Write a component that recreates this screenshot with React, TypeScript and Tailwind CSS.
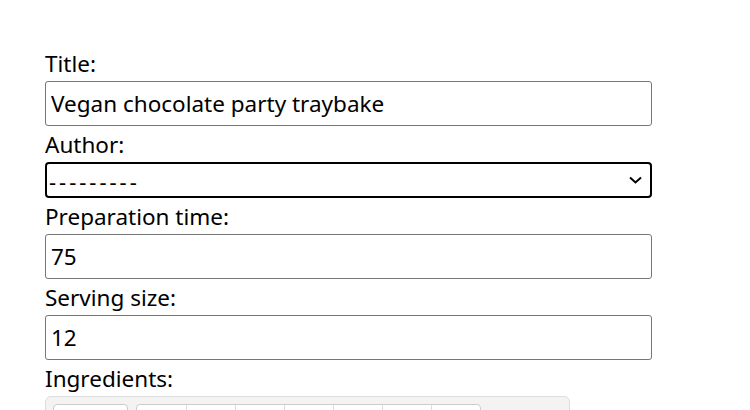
export default function App() {
  const segments = [0, 1, 2, 3, 4, 5, 6];

  return (
    <main className="bg-white h-[410px] overflow-hidden" style={{ fontFamily: '"Noto Sans", "Open Sans", sans-serif' }}>
      <form className="pl-[45px] pt-[45px] w-[652px] text-[22.5px] text-black">
        <label className="block h-9 leading-[30px] pt-[4px]">Title:</label>
        <input
          type="text"
          defaultValue="Vegan chocolate party traybake"
          className="block w-full h-[45px] border border-[#767676] rounded-[3px] px-[5px] text-[22.5px] outline-none"
        />

        <label className="block h-9 leading-[30px] pt-[4px]">Author:</label>
        <div className="relative h-9 border-2 border-black rounded-[4px] flex items-center pl-[2px] pt-[2px]">
          <span className="text-[22px] leading-none tracking-[3px]">---------</span>
          <svg className="absolute right-[8px] top-1/2 -translate-y-1/2" width="13" height="8" viewBox="0 0 13 8">
            <path d="M1 1.5 L6.5 6.5 L12 1.5" fill="none" stroke="black" strokeWidth="2" />
          </svg>
        </div>

        <label className="block h-9 leading-[30px] pt-[4px]">Preparation time:</label>
        <input
          type="text"
          defaultValue="75"
          className="block w-full h-[45px] border border-[#767676] rounded-[3px] px-[5px] text-[22.5px] outline-none"
        />

        <label className="block h-9 leading-[30px] pt-[4px]">Serving size:</label>
        <input
          type="text"
          defaultValue="12"
          className="block w-full h-[45px] border border-[#767676] rounded-[3px] px-[5px] text-[22.5px] outline-none"
        />

        <label className="block h-9 leading-[30px] pt-[4px]">Ingredients:</label>
        <div className="w-[525px] h-12 bg-[#f3f3f3] border border-[#dddddd] rounded-t-[6px] flex gap-2 pl-[7px] pt-[7px]">
          <div className="w-[75px] h-8 bg-white border border-[#cccccc] rounded-[4px]" />
          <div className="flex h-8 bg-white border border-[#cccccc] rounded-[4px]">
            {segments.map((i) => (
              <div key={i} className={i === 0 ? "w-[49px]" : "w-[49px] border-l border-[#dddddd]"} />
            ))}
          </div>
        </div>
      </form>
    </main>
  );
}
